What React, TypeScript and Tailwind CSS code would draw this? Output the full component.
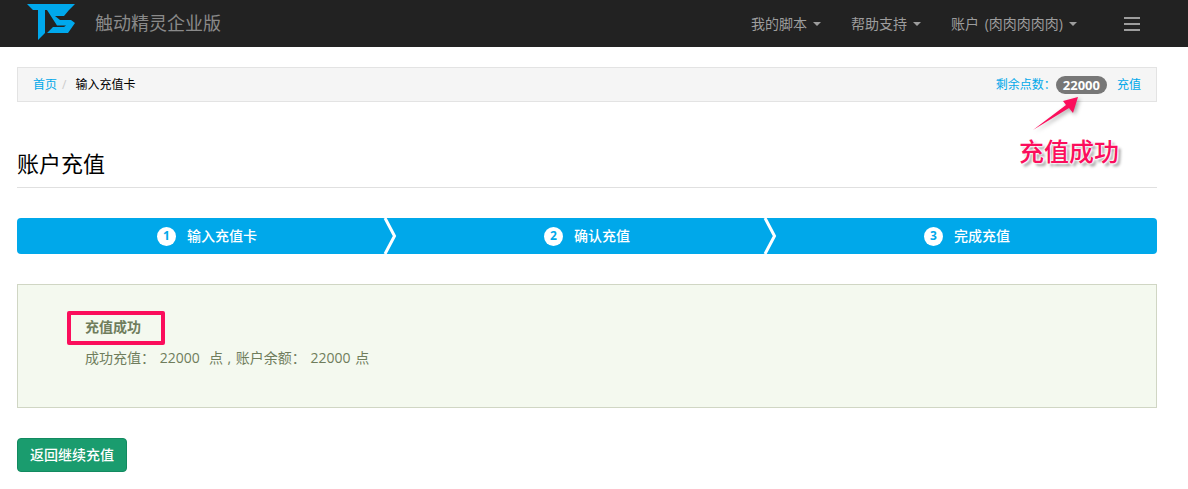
import React from "react";

const font = { fontFamily: '"Open Sans","Noto Sans CJK SC",sans-serif' };

function Caret() {
  return <span className="ml-[6px] inline-block h-0 w-0 border-x-[4px] border-t-[4px] border-x-transparent border-t-[#9d9d9d] align-middle" />;
}

function NavItem({ label }: { label: string }) {
  return (
    <a className="flex h-full items-center px-[15px] text-[14px] [word-spacing:2px] text-[#9d9d9d]">
      {label}
      <Caret />
    </a>
  );
}

function Logo() {
  return (
    <svg width="48" height="36" viewBox="27 4 48 36" className="ml-[27px] mt-[4px] shrink-0">
      <path fill="#00a8ec" d="M27 4H75L69 10H45V33L38 40V10H33Z" />
      <path fill="#00a8ec" d="M47 10H69L64 16H55L60 20H71L75 23L68 33H47L53 27H64L66 25.500H57Z" />
    </svg>
  );
}

function Step({ n, label, arrow }: { n: number; label: string; arrow?: boolean }) {
  return (
    <div className="relative flex flex-1 items-center justify-center text-[14px] font-medium text-white">
      <span className="mr-[11px] flex h-[19px] w-[19px] items-center justify-center rounded-full bg-white text-[12px] font-bold text-[#00a8ea]">{n}</span>
      <span className="pb-[1px]">{label}</span>
      {arrow && (
        <svg width="14" height="36" viewBox="0 0 14 36" className="absolute right-0 top-0">
          <path d="M2 0 L11.500 18 L2 36" fill="none" stroke="white" strokeWidth="3" />
        </svg>
      )}
    </div>
  );
}

export default function App() {
  return (
    <div className="relative h-[489px] w-[1188px] overflow-hidden bg-white" style={font}>
      <header className="flex h-[47px] items-stretch bg-[#222222]">
        <Logo />
        <span className="ml-[20px] flex items-center text-[18px] text-[#8a8a8a]">触动精灵企业版</span>
        <nav className="ml-auto flex items-center">
          <NavItem label="我的脚本" />
          <NavItem label="帮助支持" />
          <NavItem label="账户 (肉肉肉肉肉)" />
          <div className="ml-[32px] mr-[48px] flex w-[16px] flex-col gap-[4px]">
            <span className="h-[2px] bg-[#9d9d9d]" />
            <span className="h-[2px] bg-[#9d9d9d]" />
            <span className="h-[2px] bg-[#9d9d9d]" />
          </div>
        </nav>
      </header>

      <main className="ml-[17px] w-[1140px] pt-[20px]">
        <div className="flex h-[35px] items-center justify-between border border-[#e3e3e3] bg-[#f5f5f5] px-[15px] text-[12px]">
          <div className="flex items-center">
            <a className="text-[#00a8ea]">首页</a>
            <span className="mx-[5px] text-[#ccc]">/</span>
            <span className="ml-[4px] text-black">输入充值卡</span>
          </div>
          <div className="flex items-center">
            <span className="text-[#00a8ea]">剩余点数：</span>
            <span className="rounded-full bg-[#777] px-[7px] text-[13px] leading-[18px] font-bold text-white">22000</span>
            <a className="ml-[10px] text-[#00a8ea]">充值</a>
          </div>
        </div>

        <h1 className="mt-[47px] border-b border-[#e0e0e0] pb-[10px] text-[22px] leading-[28px] font-normal text-black">账户充值</h1>

        <div className="mt-[30px] flex h-[36px] rounded-[4px] bg-[#00a8ea]">
          <Step n={1} label="输入充值卡" arrow />
          <Step n={2} label="确认充值" arrow />
          <Step n={3} label="完成充值" />
        </div>

        <div className="mt-[30px] h-[124px] border border-[#d0d6c4] bg-[#f4f9ef] pl-[67px] pt-[30px] text-[14px] text-[#6f7d5c]">
          <div className="relative leading-[24px] font-bold">
            充值成功
            <span className="absolute left-[-18px] top-[-4px] h-[34px] w-[98px] rounded-[2px] border-[4px] border-[#fb0e5c]" />
          </div>
          <p className="mt-[9px] leading-[20px] whitespace-pre [word-spacing:1px]">成功充值： 22000  点 , 账户余额： 22000 点</p>
        </div>

        <button className="mt-[30px] h-[34px] w-[110px] rounded-[4px] border border-[#128a60] bg-[#1a9c6e] pb-[1px] text-[14px] font-medium text-white">返回继续充值</button>
      </main>

      <svg width="60" height="50" viewBox="0 0 60 50" className="absolute left-[1028px] top-[92px]" style={{ filter: "drop-shadow(2px 2px 2px rgba(0,0,0,.35))" }}>
        <path fill="#fb0e5c" d="M5 38 L38 13 L35 9 L50 5 L45 21 L41 16 Z" />
      </svg>
      <span
        className="absolute left-[1019px] top-[134px] text-[25px] leading-[34px] font-medium text-[#fb0e5c]"
        style={{ textShadow: "0 0 2px #fff, 0 0 2px #fff, 0 0 2px #fff, 0 0 2px #fff, 3px 3px 3px rgba(0,0,0,.4)" }}
      >
        充值成功
      </span>
    </div>
  );
}
